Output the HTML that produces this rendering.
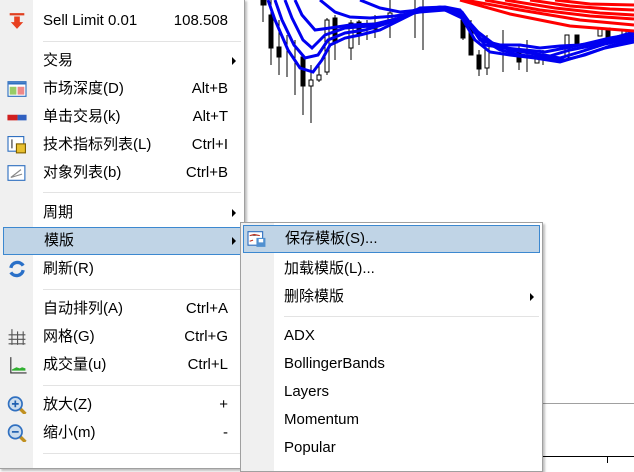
<!DOCTYPE html>
<html><head><meta charset="utf-8"><style>
*{margin:0;padding:0;box-sizing:border-box}
body{width:634px;height:463px;overflow:hidden;background:#fff;position:relative;font-family:"Liberation Sans","Noto Sans CJK SC",sans-serif;font-size:15px;color:#000}
.menu{position:absolute;background:#fff;border:1px solid #a0a0a0;box-shadow:2px 2px 2px rgba(0,0,0,.25)}
.strip{position:absolute;left:0;top:0;bottom:0;width:33px;background:#f0f0f0}
.it{position:absolute;left:0;right:0;height:28px;line-height:28px}
.it .t{position:absolute;left:43px}
.it .k{position:absolute;right:16px}
.it .a{position:absolute;right:8px;top:10px;width:0;height:0;border-left:4px solid #000;border-top:4px solid transparent;border-bottom:4px solid transparent}
.sep{position:absolute;left:43px;right:3px;height:1px;background:#e3e3e3}
.hl{background:#c0d4e6;border:1px solid #3c88d0}
.ic{position:absolute;left:7px;top:5px;width:20px;height:18px}
</style></head><body>
<svg width="634" height="463" style="position:absolute;left:0;top:0">
<g stroke="#000" stroke-width="1">
<line x1="263" y1="0" x2="263" y2="22"/><rect x="261" y="0" width="5" height="5" fill="#000"/>
<line x1="271" y1="0" x2="271" y2="65"/><rect x="269" y="15" width="4" height="33" fill="#000"/>
<line x1="279" y1="20" x2="279" y2="75"/><rect x="277" y="47" width="4" height="10" fill="#000"/>
<line x1="287" y1="35" x2="287" y2="77"/><line x1="295" y1="40" x2="295" y2="95"/>
<line x1="303" y1="55" x2="303" y2="115"/><rect x="301" y="57" width="4" height="29" fill="#000"/>
<line x1="311" y1="65" x2="311" y2="123"/><rect x="309" y="80" width="4" height="6" fill="#fff"/>
<line x1="319" y1="65" x2="319" y2="82"/><rect x="317" y="75" width="4" height="5" fill="#fff"/>
<line x1="327" y1="18" x2="327" y2="75"/><rect x="325" y="20" width="4" height="52" fill="#fff"/>
<line x1="335" y1="15" x2="335" y2="60"/><rect x="333" y="18" width="4" height="25" fill="#000"/>
<line x1="351" y1="20" x2="351" y2="60"/><rect x="349" y="23" width="4" height="25" fill="#fff"/>
<line x1="359" y1="20" x2="359" y2="45"/><rect x="357" y="22" width="4" height="13" fill="#000"/>
<line x1="367" y1="20" x2="367" y2="40"/><line x1="375" y1="15" x2="375" y2="38"/><rect x="373" y="23" width="4" height="6" fill="#fff"/>
<line x1="390" y1="0" x2="390" y2="38"/><rect x="388" y="13" width="4" height="8" fill="#fff"/>
<line x1="415" y1="0" x2="415" y2="38"/><line x1="423" y1="0" x2="423" y2="50"/>
<line x1="463" y1="15" x2="463" y2="40"/><rect x="461" y="20" width="4" height="18" fill="#000"/>
<line x1="471" y1="20" x2="471" y2="55"/><rect x="469" y="25" width="4" height="30" fill="#000"/>
<line x1="479" y1="50" x2="479" y2="76"/><rect x="477" y="55" width="4" height="14" fill="#000"/>
<line x1="487" y1="35" x2="487" y2="75"/><rect x="485" y="40" width="4" height="28" fill="#fff"/>
<line x1="503" y1="30" x2="503" y2="72"/><line x1="519" y1="45" x2="519" y2="70"/><rect x="517" y="50" width="4" height="12" fill="#000"/>
<line x1="527" y1="40" x2="527" y2="72"/><rect x="535" y="55" width="4" height="8" fill="#fff"/>
<line x1="543" y1="50" x2="543" y2="65"/><line x1="567" y1="40" x2="567" y2="55"/><rect x="565" y="35" width="4" height="22" fill="#fff"/>
<rect x="575" y="35" width="4" height="10" fill="#000"/><rect x="598" y="28" width="4" height="8" fill="#fff"/>
<rect x="606" y="28" width="4" height="10" fill="#000"/><rect x="622" y="30" width="4" height="10" fill="#fff"/>
</g>
<g fill="none" stroke="#0000f0" stroke-width="3">
<polyline points="268,0 275,20 288,50 300,68 313,72 322,60 330,45 345,38 360,35 380,30 400,20 420,10 440,7 458,10 470,25 480,40 500,45 520,45 540,48 560,46 580,45 600,42 620,36 634,32"/>
<polyline points="275,0 282,20 294,45 305,58 318,55 328,40 345,33 365,30 385,24 405,16 420,8 445,7 460,10 472,28 485,45 505,48 525,50 545,52 565,48 585,44 610,38 634,34"/>
<polyline points="285,0 292,18 303,40 312,48 325,35 345,28 370,26 395,20 415,10 440,8 462,12 475,30 490,42 510,50 530,53 550,56 570,50 590,46 615,40 634,36"/>
<polyline points="295,0 302,15 315,30 330,28 350,25 375,24 400,18 420,10 445,8 462,14 478,32 495,45 515,50 540,55 560,58 580,52 605,44 634,38"/>
<polyline points="320,0 335,12 350,17 370,18 395,16 420,12 445,10 462,16 480,38 500,50 520,55 545,58 565,60 585,55 610,46 634,40"/>
<polyline points="360,0 380,8 400,12 420,10 445,10 462,18 475,40 490,52 510,55 535,58 560,62 580,56 605,48 634,42"/>
</g>
<g fill="none" stroke="#f00" stroke-width="3">
<polyline points="465,0 520,10 580,20 634,25"/>
<polyline points="485,0 540,10 590,16 634,19"/>
<polyline points="505,0 555,8 600,13 634,15"/>
<polyline points="530,0 570,6 610,9 634,10"/>
<polyline points="555,0 590,4 634,5"/>
<polyline points="460,0 510,14 570,26 634,31"/>
</g>
<line x1="542" y1="403.5" x2="634" y2="403.5" stroke="#a0a0a0"/>
<line x1="542" y1="456.5" x2="634" y2="456.5" stroke="#000"/>
<line x1="607.5" y1="456" x2="607.5" y2="463" stroke="#000"/>
</svg>

<div class="menu" style="left:-1px;top:-1px;width:246px;height:470px">
<div class="strip"></div>
<div class="it" style="top:7px"><svg class="ic" viewBox="0 0 17 16"><rect x="2" y="1" width="13" height="2" fill="#e04020"/><path d="M6 4h5v5h3l-5.5 6L3 9h3z" fill="#e84020"/></svg><span class="t">Sell Limit 0.01</span><span class="k">108.508</span></div>
<div class="sep" style="top:41px"></div>
<div class="it" style="top:47px"><span class="t">交易</span><span class="a"></span></div>
<div class="it" style="top:75px"><svg class="ic" viewBox="0 0 17 16"><rect x="0.5" y="1.5" width="16" height="13" fill="#fff" stroke="#3070c0"/><rect x="1" y="2" width="15" height="2" fill="#3070c0"/><rect x="2" y="6" width="6" height="7" fill="#9c6"/><rect x="9" y="6" width="6" height="7" fill="#e88"/></svg><span class="t">市场深度(D)</span><span class="k">Alt+B</span></div>
<div class="it" style="top:103px"><svg class="ic" viewBox="0 0 17 16"><rect x="0" y="6" width="9" height="5" fill="#d02020"/><rect x="9" y="6" width="8" height="5" fill="#3060c0"/></svg><span class="t">单击交易(k)</span><span class="k">Alt+T</span></div>
<div class="it" style="top:131px"><svg class="ic" viewBox="0 0 17 16"><rect x="0.5" y="0.5" width="14" height="13" fill="#fff" stroke="#3070c0"/><rect x="8" y="7" width="8" height="8" fill="#e8c030" stroke="#806000"/><path d="M4 3v8" stroke="#333"/></svg><span class="t">技术指标列表(L)</span><span class="k">Ctrl+I</span></div>
<div class="it" style="top:159px"><svg class="ic" viewBox="0 0 17 16"><rect x="0.5" y="1.5" width="15" height="13" fill="#fff" stroke="#3070c0"/><path d="M3 12l9-7M3 12l10-3" stroke="#888"/></svg><span class="t">对象列表(b)</span><span class="k">Ctrl+B</span></div>
<div class="sep" style="top:192px"></div>
<div class="it" style="top:199px"><span class="t">周期</span><span class="a"></span></div>
<div class="it hl" style="top:227px;left:3px;right:3px;height:28px;line-height:26px"><span class="t" style="left:40px">模版</span><span class="a" style="right:4px;top:9px"></span></div>
<div class="it" style="top:255px"><svg class="ic" viewBox="0 0 17 16"><path d="M3 7a6 6 0 0 1 11-2M14 9a6 6 0 0 1-11 2" fill="none" stroke="#2a70c8" stroke-width="3"/></svg><span class="t">刷新(R)</span></div>
<div class="sep" style="top:289px"></div>
<div class="it" style="top:295px"><span class="t">自动排列(A)</span><span class="k">Ctrl+A</span></div>
<div class="it" style="top:323px"><svg class="ic" viewBox="0 0 17 16"><path d="M4 1v14M9 3v12M14 3v12M1 6h15M1 10h15M1 14h15" stroke="#555"/></svg><span class="t">网格(G)</span><span class="k">Ctrl+G</span></div>
<div class="it" style="top:351px"><svg class="ic" viewBox="0 0 17 16"><path d="M3 1v14h14" stroke="#333" fill="none"/><path d="M4 13h12v-2l-3-1-2 1-3-1-4 2z" fill="#30b030"/></svg><span class="t">成交量(u)</span><span class="k">Ctrl+L</span></div>
<div class="sep" style="top:385px"></div>
<div class="it" style="top:391px"><svg class="ic" viewBox="0 0 17 16"><path d="M11 11l5 5" stroke="#c09020" stroke-width="3"/><circle cx="7" cy="7" r="6" fill="#cde" stroke="#3070c0" stroke-width="1.5"/><path d="M4 7h6M7 4v6" stroke="#2060b0" stroke-width="1.5"/></svg><span class="t">放大(Z)</span><span class="k">+</span></div>
<div class="it" style="top:419px"><svg class="ic" viewBox="0 0 17 16"><path d="M11 11l5 5" stroke="#c09020" stroke-width="3"/><circle cx="7" cy="7" r="6" fill="#cde" stroke="#3070c0" stroke-width="1.5"/><path d="M4 7h6" stroke="#2060b0" stroke-width="1.5"/></svg><span class="t">缩小(m)</span><span class="k">-</span></div>
<div class="sep" style="top:453px"></div>
</div>

<div class="menu" style="left:240px;top:222px;width:303px;height:250px">
<div class="strip"></div>
<div class="it hl" style="top:2px;left:2px;right:2px;height:28px;line-height:26px"><svg class="ic" style="left:3px;top:4px" viewBox="0 0 17 16"><rect x="0.5" y="1.5" width="13" height="12" fill="#fff" stroke="#3070c0"/><path d="M2 5l4-1 5 1M2 10l3-1" stroke="#c03020"/><rect x="8" y="7" width="8" height="8" fill="#5090d0"/><rect x="10" y="8" width="4" height="3" fill="#fff"/></svg><span class="t" style="left:41px">保存模板(S)...</span></div>
<div class="it" style="top:32px"><span class="t">加载模版(L)...</span></div>
<div class="it" style="top:60px"><span class="t">删除模版</span><span class="a"></span></div>
<div class="sep" style="top:93px"></div>
<div class="it" style="top:99px"><span class="t">ADX</span></div>
<div class="it" style="top:127px"><span class="t">BollingerBands</span></div>
<div class="it" style="top:155px"><span class="t">Layers</span></div>
<div class="it" style="top:183px"><span class="t">Momentum</span></div>
<div class="it" style="top:211px"><span class="t">Popular</span></div>
</div>
</body></html>
